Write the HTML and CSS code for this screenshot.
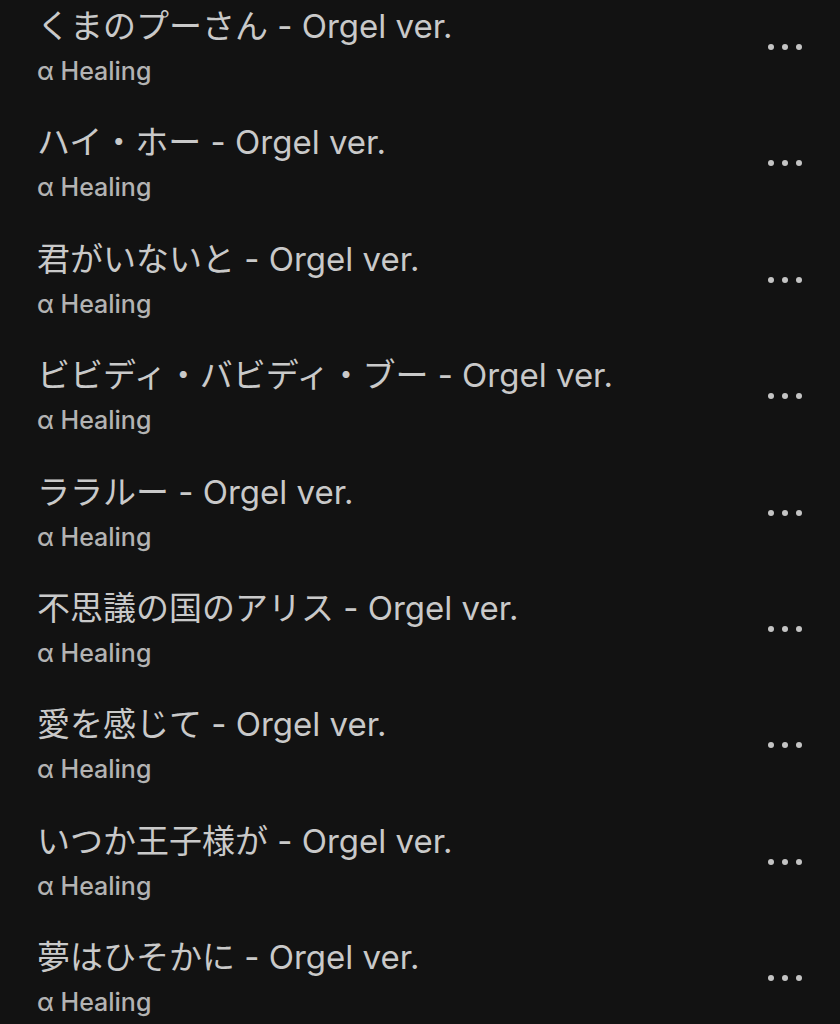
FILE: index.html
```html
<!DOCTYPE html>
<html lang="ja">
<head>
    <meta charset="UTF-8">
    <meta name="viewport" content="width=device-width, initial-scale=1.0">
    <title>α Healing - Orgel</title>
    <link rel="stylesheet" href="styles.css">
</head>
<body>
    <ul class="track-list">
        <li class="track">
            <div class="track-info">
                <div class="track-title">くまのプーさん - Orgel ver.</div>
                <div class="track-artist">α Healing</div>
            </div>
            <button class="more-btn" aria-label="その他"><span></span><span></span><span></span></button>
        </li>
        <li class="track">
            <div class="track-info">
                <div class="track-title">ハイ・ホー - Orgel ver.</div>
                <div class="track-artist">α Healing</div>
            </div>
            <button class="more-btn" aria-label="その他"><span></span><span></span><span></span></button>
        </li>
        <li class="track">
            <div class="track-info">
                <div class="track-title">君がいないと - Orgel ver.</div>
                <div class="track-artist">α Healing</div>
            </div>
            <button class="more-btn" aria-label="その他"><span></span><span></span><span></span></button>
        </li>
        <li class="track">
            <div class="track-info">
                <div class="track-title">ビビディ・バビディ・ブー - Orgel ver.</div>
                <div class="track-artist">α Healing</div>
            </div>
            <button class="more-btn" aria-label="その他"><span></span><span></span><span></span></button>
        </li>
        <li class="track">
            <div class="track-info">
                <div class="track-title">ララルー - Orgel ver.</div>
                <div class="track-artist">α Healing</div>
            </div>
            <button class="more-btn" aria-label="その他"><span></span><span></span><span></span></button>
        </li>
        <li class="track">
            <div class="track-info">
                <div class="track-title">不思議の国のアリス - Orgel ver.</div>
                <div class="track-artist">α Healing</div>
            </div>
            <button class="more-btn" aria-label="その他"><span></span><span></span><span></span></button>
        </li>
        <li class="track">
            <div class="track-info">
                <div class="track-title">愛を感じて - Orgel ver.</div>
                <div class="track-artist">α Healing</div>
            </div>
            <button class="more-btn" aria-label="その他"><span></span><span></span><span></span></button>
        </li>
        <li class="track">
            <div class="track-info">
                <div class="track-title">いつか王子様が - Orgel ver.</div>
                <div class="track-artist">α Healing</div>
            </div>
            <button class="more-btn" aria-label="その他"><span></span><span></span><span></span></button>
        </li>
        <li class="track">
            <div class="track-info">
                <div class="track-title">夢はひそかに - Orgel ver.</div>
                <div class="track-artist">α Healing</div>
            </div>
            <button class="more-btn" aria-label="その他"><span></span><span></span><span></span></button>
        </li>
    </ul>
</body>
</html>
```

FILE: styles.css
```css
body {
    margin: 0;
    background-color: #121212;
    font-family: 'Inter', 'Noto Sans CJK JP', sans-serif;
    color: #c8c8c8;
    overflow: hidden;
}
.track-list {
    list-style: none;
    margin: 0;
    padding: 0 38px 0 37px;
}
.track {
    display: flex;
    align-items: flex-start;
    height: 116.4px;
}
.track-info {
    flex: 1;
    padding-top: 6px;
}
.track-title {
    font-size: 33px;
    line-height: 40px;
    color: #c9c9c9;
    white-space: nowrap;
}
.track-artist {
    font-size: 25px;
    font-weight: 500;
    line-height: 30px;
    margin-top: 10px;
    color: #b3b3b3;
}
.more-btn {
    display: flex;
    gap: 8px;
    margin-top: 44px;
    padding: 0;
    background: none;
    border: none;
    cursor: pointer;
}
.more-btn span {
    width: 6px;
    height: 6px;
    border-radius: 50%;
    background-color: #c4c4c4;
}
```
